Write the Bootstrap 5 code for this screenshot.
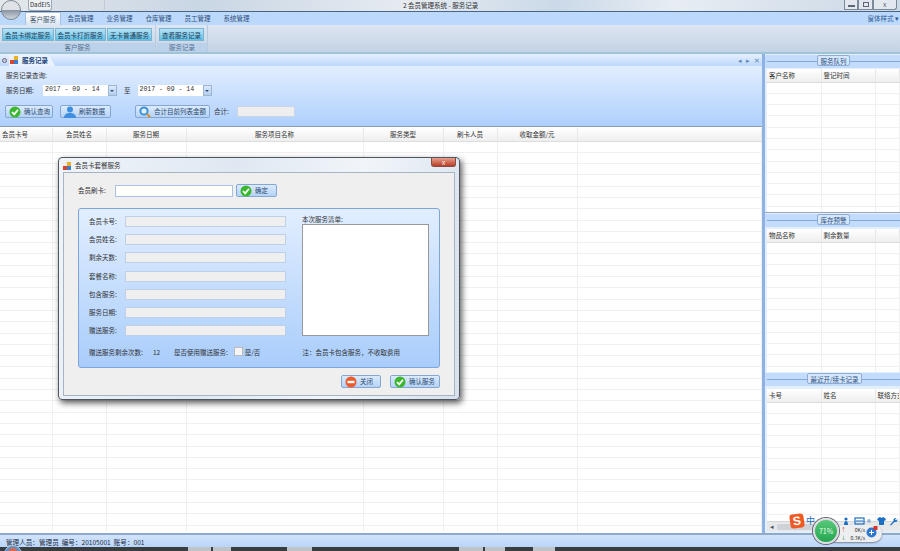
<!DOCTYPE html>
<html lang="zh">
<head>
  <meta charset="UTF-8">
  <title>DadEIS</title>
  <link href="https://cdn.jsdelivr.net/npm/bootstrap@5.3.3/dist/css/bootstrap.min.css" rel="stylesheet">
  <style>
    html, body { height: 551px; overflow: hidden; }
    body { font: 6.5px/1 "Noto Sans CJK SC", "Liberation Sans", sans-serif; color: #333; background: #fff; position: relative; }
    .app { width: 900px; height: 551px; }

    /* title bar */
    .title-strip { height: 12px; padding-left: 28px; border-bottom: 1px solid #4a6484; background: linear-gradient(100deg, #e4e8ec 0%, #c9d6e4 22%, #e6ebf1 45%, #cbd9e8 62%, #e7edf3 75%, #cbd8e6 100%); }
    .orb { position: absolute; left: 1px; top: 0; width: 20px; height: 20px; border-radius: 50%; border: 1px solid #7b8794; background: linear-gradient(#dfe3e8 0 48%, #8b96a3 52%, #cfd6dd 100%); }
    .title-tab { width: 24px; height: 11px; padding-top: 2px; text-align: center; font-size: 6px; background: #eef1f5; border: 1px solid #9ca8b5; border-top: 0; border-radius: 0 0 3px 3px; }
    .title-tab2 { width: 53px; height: 11px; background: #d7dee6; border-right: 1px solid #c3ccd6; border-radius: 0 0 3px 0; }
    .title-text { margin-left: 298px; margin-top: 2px; width: 130px; }
    .win-btns { margin-left: auto; height: 10px; margin-right: 3px; }
    .win-btn { width: 14px; height: 10px; border: 1px solid #7c8999; border-top: 0; background: #e3e8ee; position: relative; }
    .win-btn.mid { width: 15px; }
    .win-btn.wide { width: 24px; border-radius: 0 0 3px 0; }
    .win-btn span { position: absolute; left: 3px; top: 5px; width: 7px; height: 2px; border: 1px solid #5a6675; }
    .win-btn.mid span { left: 4px; top: 2px; height: 5px; width: 6px; }
    .win-btn.wide span { left: 8px; top: 2px; height: 5px; width: 6px; border: 0; }
    .win-btn.wide span::before { content: "x"; position: absolute; top: -1px; left: 1px; color: #5a6675; font-size: 7px; }

    /* menu tabs */
    .menu-strip { height: 13px; padding-left: 25px; background: #bcd8fb; }
    .menu-tab { width: 39px; text-align: center; line-height: 13px; color: #2f4f7a; }
    .menu-tab.on { width: 36px; background: linear-gradient(#fff, #dbe6f3); border: 1px solid #a9c2e0; border-bottom: 0; color: #47586c; }
    .style-link { margin-left: auto; margin-right: 1px; line-height: 13px; color: #2b5a93; }
    .ribbon { height: 27px; background: linear-gradient(#dde6f1, #c3d3e5); border-bottom: 2px solid #9fc4d8; box-sizing: content-box; }
    .rb-group { height: 27px; margin-right: 1px; border-right: 1px solid #b9cbe0; }
    .rb-btns { height: 18px; padding: 3px 3px 0 2px; gap: 1px; }
    .rb-btn { height: 13px; line-height: 12px; padding: 0 2px; background: linear-gradient(#b8e3f6, #5fc0e4); border: 1px solid #7fb3ce; color: #1d3b57; white-space: nowrap; }
    .rb-name { height: 9px; line-height: 8px; text-align: center; background: #bcd2ea; color: #55718f; }

    /* work area */
    .work { height: 479px; }
    .main-col { width: 762px; }
    .doc-tabs { height: 12px; background: linear-gradient(#e6f0fd, #bcd8fb); }
    .doc-tab { width: 46px; line-height: 12px; background: #e9f2fe; color: #1c4478; font-weight: 700; clip-path: polygon(0 0, 86% 0, 100% 100%, 0 100%); padding-left: 1px; }
    .gear { width: 5px; height: 5px; border-radius: 50%; border: 1px solid #667; background: #ccd; margin: 0 2px; }
    .doc-arrows { margin-left: auto; margin-right: 2px; color: #5d88bb; gap: 4px; line-height: 12px; }
    .query { height: 61px; padding: 4px 5px 0; background: linear-gradient(#e2eeff, #aed0fd); border-bottom: 1px solid #8e9db0; }
    .q-line { height: 11px; line-height: 11px; }
    .q-label { width: 38px; padding-left: 1px; }
    .q-to { margin: 0 7px; }
    .q-btns { margin-top: 9px; }
    .date-box { width: 74px; height: 11px; background: #fff; position: relative; padding-left: 2px; line-height: 10px; font-family: "Liberation Mono", monospace; }
    .date-box::before { content: ""; position: absolute; right: 0; top: 0; width: 9px; height: 11px; background: linear-gradient(#dce9f8, #b4cdec); border: 1px solid #9db6d4; }
    .date-box::after { content: ""; position: absolute; right: 3px; top: 5px; border: 2px solid transparent; border-top-color: #2a4f86; border-bottom: 0; }
    .sum-box { width: 58px; height: 11px; background: #eee; border: 1px solid #c8d6e6; }
    .ui-btn { height: 13px; display: flex; align-items: center; gap: 3px; padding: 0 3px; background: linear-gradient(#dcebfd, #b4d2f6); border: 1px solid #85a7d1; border-radius: 2px; color: #2c4a6e; white-space: nowrap; }
    .ui-btn svg { flex: none; }
    .bw-40 { width: 40px; }
    .bw-41 { width: 41px; }
    .bw-48 { width: 48px; }
    .bw-50 { width: 50px; }
    .bw-51 { width: 51px; margin-left: 7px; }
    .bw-75 { width: 75px; margin-left: 24px; }

    /* grids */
    .grid-tbl { border-collapse: collapse; table-layout: fixed; width: 100%; background: #fff; }
    .grid-tbl th { height: 13px; font-weight: 400; text-align: center; background: linear-gradient(#fff, #eee); border-right: 1px solid #e8e8e8; border-bottom: 1px solid #ddd; padding: 0; color: #333; white-space: nowrap; overflow: hidden; }
    .grid-tbl th.lft { text-align: left; padding-left: 2px; }
    .grid-tbl td { height: 11.3px; border-right: 1px solid #f0f0f0; border-bottom: 1px solid #f0f0f0; padding: 0; }
    .main-grid { height: 405px; overflow: hidden; background: #fff; border-top: 1px solid #fff; }
    .status-bar { height: 14px; line-height: 15px; padding-left: 6px; border-top: 2px solid #8fa9c9; background: linear-gradient(#d2e4fb, #b9d5f9); color: #1f2b3a; font-size: 6.6px; overflow: hidden; }
    .task-strip { height: 4px; background: #383d40; position: relative; }
    .task-strip i { position: absolute; top: 0; height: 4px; background: #bfc4c8; }
    .start-orb { position: absolute; left: 4px; top: 545px; width: 18px; height: 18px; border-radius: 50%; background: radial-gradient(circle at 50% 40%, #e8623a 0 22%, #4d94d8 50%, #28506f 100%); border: 1px solid #b8c4cc; }

    /* right docks */
    .side-col { width: 138px; border-left: 3px solid #8fb2e4; }
    .dock { background: #e4effd; overflow: hidden; }
    .dock-top { height: 158px; }
    .dock-mid { height: 160px; border-top: 1px solid #9aa7b6; }
    .dock-low { height: 161px; }
    .dock-cap { height: 13px; position: relative; background: #c4dcfb; }
    .dock-cap::before { content: ""; position: absolute; left: 2px; right: 0; top: 6px; height: 1px; background: #86a8d6; }
    .dock-cap span { position: relative; display: block; width: 33px; height: 11px; margin-top: 1px; line-height: 10px; margin-left: 52px; text-align: center; background: #d5e6fd; border: 1px solid #8dacd6; border-radius: 2px; color: #2b517f; white-space: nowrap; }
    .dock-cap span.long { width: 55px; margin-left: 42px; }
    .dock-body { padding: 1px 0 0 2px; overflow: hidden; }
    .dock-low .dock-body { height: 135px; padding-top: 3px; }
    .dock-mid .dock-body { padding-top: 2px; }
    .scroll-bar { height: 10px; background: #e6e8ea; position: relative; border-top: 1px solid #d4d6d9; margin-left: 2px; color: #556; padding-left: 3px; line-height: 9px; }
    .scroll-bar i { position: absolute; left: 10px; top: 2px; width: 40px; height: 6px; background: #cfd3d8; border-radius: 2px; }

    /* floating dialog */
    .dialog { position: absolute; left: 58px; top: 157px; width: 402px; height: 243px; padding: 0 4px 4px; background: linear-gradient(100deg, #f0f4f9, #dfe8f2 40%, #f1f5f9 70%, #d6e1ed); border: 1px solid #4e5660; border-radius: 4px; box-shadow: 2px 3px 6px rgba(0, 0, 0, .65); }
    .dlg-title { height: 14px; line-height: 14px; color: #333; }
    .dlg-close { margin-left: auto; width: 25px; height: 9px; margin-right: -1px; background: linear-gradient(#e8a08e, #b83d26); border: 1px solid #8a4a40; border-top: 0; border-radius: 0 0 3px 3px; color: #fff; text-align: center; line-height: 8px; }
    .dlg-client { height: 224px; background: #efefef; border: 1px solid #a6b4c4; padding: 11px 14px 0; }
    .swipe-row { height: 13px; margin-bottom: 11px; }
    .swipe-row label { width: 37px; }
    .swipe-in { width: 118px; height: 12px; background: #fff; border: 1px solid #aac0e4; margin-right: 3px; }
    .dlg-panel { height: 160px; padding: 7px 10px 0; background: linear-gradient(#e2eeff, #a9cdfb); border: 1px solid #7ea6de; border-radius: 3px; }
    .field-row { height: 11px; margin-bottom: 7.2px; line-height: 11px; }
    .field-row label { width: 36px; }
    .field-in { width: 161px; height: 11px; background: #efefef; border: 1px solid #bdd0e8; }
    .bill-col { margin-left: 16px; }
    .bill-list { width: 127px; height: 112px; margin-top: 1px; background: #fff; border: 1px solid #999; }
    .dlg-foot { margin-top: 4px; white-space: nowrap; }
    .foot-a { width: 64px; }
    .foot-b { width: 21px; }
    .foot-c { margin-left: 42px; }
    .tick { width: 9px; height: 9px; background: #f5f5f5; border: 1px solid #bbb; margin: 0 2px 0 6px; }
    .dlg-actions { gap: 9px; margin: 7px 0 0; }

    /* tray float */
    .ime-logo { position: absolute; left: 790px; top: 514px; width: 14px; height: 14px; background: #ef5a24; border-radius: 3px; color: #fff; font: 700 12px/14px "Liberation Sans", sans-serif; text-align: center; transform: rotate(-8deg); }
    .ime-tools { position: absolute; left: 806px; top: 516px; color: #1d6fc4; font-size: 9px; line-height: 1; }
    .tray-icons { position: absolute; left: 843px; top: 517px; }
    .speed-pill { position: absolute; left: 826px; top: 525px; width: 56px; height: 17px; background: #eceef0; border-radius: 9px; box-shadow: 0 1px 2px rgba(0, 0, 0, .4); font-size: 5px; }
    .speed-pill b { position: absolute; font-weight: 400; color: #333; white-space: nowrap; }
    .speed-pill .up-arrow { left: 15px; top: 1px; color: #c33; }
    .speed-pill .down-arrow { left: 15px; top: 9px; color: #2a8f3f; }
    .up-rate { right: 17px; top: 2px; }
    .down-rate { right: 17px; top: 10px; }
    .speed-pill svg { position: absolute; left: 40px; top: 1px; }
    .speed-ball { position: absolute; left: 813px; top: 518px; width: 26px; height: 26px; border-radius: 50%; background: linear-gradient(#58c878, #23a650); border: 2px solid #d9dde0; box-shadow: 0 0 0 1px #667; color: #e8ffe9; text-align: center; line-height: 22px; font-size: 7px; }
  </style>
</head>
<body>
  <div class="app d-flex flex-column">
    <div class="title-strip d-flex">
      <div class="title-tab">DadEIS</div>
      <div class="title-tab2"></div>
      <div class="title-text text-nowrap">2 会员管理系统 - 服务记录</div>
      <div class="win-btns d-flex">
        <div class="win-btn"><span></span></div>
        <div class="win-btn mid"><span></span></div>
        <div class="win-btn wide"><span></span></div>
      </div>
    </div>
    <div class="menu-strip d-flex">
      <div class="menu-tab on">客户服务</div>
      <div class="menu-tab">会员管理</div>
      <div class="menu-tab">业务管理</div>
      <div class="menu-tab">仓库管理</div>
      <div class="menu-tab">员工管理</div>
      <div class="menu-tab">系统管理</div>
      <div class="style-link">窗体样式 ▾</div>
    </div>
    <div class="ribbon d-flex">
      <div class="rb-group">
        <div class="rb-btns d-flex">
          <div class="rb-btn">会员卡绑定服务</div>
          <div class="rb-btn">会员卡打折服务</div>
          <div class="rb-btn">无卡普通服务</div>
        </div>
        <div class="rb-name">客户服务</div>
      </div>
      <div class="rb-group">
        <div class="rb-btns d-flex">
          <div class="rb-btn">查看服务记录</div>
        </div>
        <div class="rb-name">服务记录</div>
      </div>
    </div>

    <div class="work d-flex">
      <div class="main-col">
        <div class="doc-tabs d-flex align-items-center">
          <span class="gear"></span>
          <div class="doc-tab d-flex align-items-center gap-1">
            <svg width="8" height="8" viewBox="0 0 8 8"><rect width="4" height="4" y="4" fill="#d9452b"/><rect x="4" width="4" height="4" fill="#e8b02a"/><rect x="4" y="4" width="4" height="4" fill="#3b7fd1"/><rect width="4" height="4" fill="#eee"/></svg>
            服务记录
          </div>
          <div class="doc-arrows d-flex"><span>◂</span><span>▸</span><span>✕</span></div>
        </div>
        <div class="query">
          <div class="q-line q-label text-nowrap">服务记录查询:</div>
          <div class="q-line d-flex mt-1">
            <span class="q-label">服务日期:</span>
            <span class="date-box">2017 - 09 - 14</span>
            <span class="q-to">至</span>
            <span class="date-box">2017 - 09 - 14</span>
          </div>
          <div class="q-btns d-flex align-items-center">
            <div class="ui-btn bw-48">
              <svg width="12" height="12" viewBox="0 0 12 12"><circle cx="6" cy="6" r="5.5" fill="#3cb82e"/><path d="M3 6l2.2 2.4L9 3.8" fill="none" stroke="#fff" stroke-width="1.8"/></svg>确认查询
            </div>
            <div class="ui-btn bw-51">
              <svg width="12" height="12" viewBox="0 0 12 12"><circle cx="6" cy="3.5" r="3" fill="#3f8fe0"/><path d="M0 12c0-4 3-5 6-5s6 1 6 5z" fill="#3f8fe0"/></svg>刷新数据
            </div>
            <div class="ui-btn bw-75">
              <svg width="12" height="12" viewBox="0 0 12 12"><circle cx="5" cy="5" r="3.6" fill="#dff0fb" stroke="#3a92d8" stroke-width="2"/><path d="M8 8l3 3" stroke="#e0902a" stroke-width="2.2"/></svg>合计目前列表金额
            </div>
            <span class="ms-1 me-2">合计:</span>
            <div class="sum-box"></div>
          </div>
        </div>
        <div class="main-grid">
          <table class="grid-tbl">
            <colgroup><col style="width:52px"><col style="width:54px"><col style="width:80px"><col style="width:177px"><col style="width:80px"><col style="width:54px"><col style="width:80px"><col></colgroup>
            <thead><tr><th class="lft">会员卡号</th><th>会员姓名</th><th>服务日期</th><th>服务项目名称</th><th>服务类型</th><th>刷卡人员</th><th>收取金额/元</th><th></th></tr></thead>
            <tbody id="mainRows"></tbody>
          </table>
        </div>
      </div>

      <div class="side-col d-flex flex-column">
        <div class="dock dock-top">
          <div class="dock-cap"><span>服务队列</span></div>
          <div class="dock-body">
            <table class="grid-tbl" data-rows="13">
              <colgroup><col style="width:54px"><col style="width:54px"><col></colgroup>
              <thead><tr><th class="lft">客户名称</th><th class="lft">登记时间</th><th></th></tr></thead>
              <tbody></tbody>
            </table>
          </div>
        </div>
        <div class="dock dock-mid">
          <div class="dock-cap"><span>库存预警</span></div>
          <div class="dock-body">
            <table class="grid-tbl" data-rows="13">
              <colgroup><col style="width:54px"><col style="width:54px"><col></colgroup>
              <thead><tr><th class="lft">物品名称</th><th class="lft">剩余数量</th><th></th></tr></thead>
              <tbody></tbody>
            </table>
          </div>
        </div>
        <div class="dock dock-low flex-grow-1">
          <div class="dock-cap"><span class="long">最近开/续卡记录</span></div>
          <div class="dock-body">
            <table class="grid-tbl" data-rows="12">
              <colgroup><col style="width:54px"><col style="width:54px"><col></colgroup>
              <thead><tr><th class="lft">卡号</th><th class="lft">姓名</th><th class="lft">联络方式</th></tr></thead>
              <tbody></tbody>
            </table>
          </div>
          <div class="scroll-bar">◂<i></i></div>
        </div>
      </div>
    </div>

    <div class="status-bar">管理人员：管理员&nbsp; 编号：20105001&nbsp; 账号：001</div>
    <div class="task-strip" id="taskStrip"></div>
  </div>

  <span class="orb"></span>
  <span class="start-orb"></span>

  <!-- dialog -->
  <div class="dialog">
    <div class="dlg-title d-flex align-items-start">
      <svg class="me-1 mt-1" width="8" height="8" viewBox="0 0 8 8"><rect y="4" width="4" height="4" fill="#d9452b"/><rect x="4" width="4" height="4" fill="#e8b02a"/><rect x="4" y="4" width="4" height="4" fill="#3b7fd1"/><rect width="4" height="4" fill="#eee"/></svg>
      <span>会员卡套餐服务</span>
      <div class="dlg-close">x</div>
    </div>
    <div class="dlg-client">
      <div class="swipe-row d-flex align-items-center">
        <label>会员刷卡:</label>
        <div class="swipe-in"></div>
        <div class="ui-btn bw-41">
          <svg width="12" height="12" viewBox="0 0 12 12"><circle cx="6" cy="6" r="5.5" fill="#3cb82e"/><path d="M3 6l2.2 2.4L9 3.8" fill="none" stroke="#fff" stroke-width="1.8"/></svg>确定
        </div>
      </div>
      <div class="dlg-panel">
        <div class="d-flex">
          <div>
            <div class="field-row d-flex"><label>会员卡号:</label><div class="field-in"></div></div>
            <div class="field-row d-flex"><label>会员姓名:</label><div class="field-in"></div></div>
            <div class="field-row d-flex"><label>剩余天数:</label><div class="field-in"></div></div>
            <div class="field-row d-flex"><label>套餐名称:</label><div class="field-in"></div></div>
            <div class="field-row d-flex"><label>包含服务:</label><div class="field-in"></div></div>
            <div class="field-row d-flex"><label>服务日期:</label><div class="field-in"></div></div>
            <div class="field-row d-flex"><label>赠送服务:</label><div class="field-in"></div></div>
          </div>
          <div class="bill-col">
            <div>本次服务清单:</div>
            <div class="bill-list"></div>
          </div>
        </div>
        <div class="dlg-foot d-flex align-items-center">
          <span class="foot-a">赠送服务剩余次数:</span>
          <span class="foot-b">12</span>
          <span>是否使用赠送服务:</span>
          <span class="tick"></span>
          <span>是/否</span>
          <span class="foot-c">注：会员卡包含服务，不收取费用</span>
        </div>
      </div>
      <div class="dlg-actions d-flex justify-content-end">
        <div class="ui-btn bw-40">
          <svg width="12" height="12" viewBox="0 0 12 12"><circle cx="6" cy="6" r="5.5" fill="#ee5b2b"/><rect x="2.5" y="4.8" width="7" height="2.4" fill="#fff"/></svg>关闭
        </div>
        <div class="ui-btn bw-50">
          <svg width="12" height="12" viewBox="0 0 12 12"><circle cx="6" cy="6" r="5.5" fill="#3cb82e"/><path d="M3 6l2.2 2.4L9 3.8" fill="none" stroke="#fff" stroke-width="1.8"/></svg>确认服务
        </div>
      </div>
    </div>
  </div>

  <!-- tray widgets on top of the window -->
  <div class="ime-logo">S</div>
  <div class="ime-tools">中</div>
  <svg class="tray-icons" width="56" height="9" viewBox="0 0 56 9">
    <circle cx="3" cy="2" r="1.6" fill="#1d6fc4"/><path d="M1 8c0-3 1-4 2-4s2 1 2 4z" fill="#1d6fc4"/>
    <rect x="12" y="1" width="9" height="6" fill="none" stroke="#1d6fc4" stroke-width="1.2"/><path d="M13 4h7" stroke="#1d6fc4"/>
    <circle cx="26" cy="4" r="2" fill="#9fb8d8"/>
    <path d="M35 1l2-1 1.5 1 1.5-1 2 1 1 2-2 1v4h-5V4l-2-1z" fill="#1d6fc4"/>
    <path d="M47 8l3.5-4a2.4 2.4 0 0 1 3-3l-1.5 1.500 1 1 1.500-1.500a2.4 2.4 0 0 1-3 3L48 8.500z" fill="#1d6fc4"/>
  </svg>
  <div class="speed-pill">
    <b class="up-arrow">↑</b><b class="up-rate">0K/s</b>
    <b class="down-arrow">↓</b><b class="down-rate">0.3K/s</b>
    <svg width="12" height="14" viewBox="0 0 12 14"><circle cx="5.500" cy="6.500" r="5" fill="#2f78cf"/><path d="M3 6.500h5M5.500 4v5" stroke="#fff"/><rect x="7.500" y="0" width="4" height="4" fill="#d8322c"/></svg>
  </div>
  <div class="speed-ball">71%</div>

  <script src="https://cdn.jsdelivr.net/npm/bootstrap@5.3.3/dist/js/bootstrap.bundle.min.js"></script>
  <script>
    // empty grid rows
    function fillRows(body, count, cols) {
      let html = '';
      for (let i = 0; i < count; i++) {
        html += '<tr>' + '<td></td>'.repeat(cols) + '</tr>';
      }
      body.innerHTML = html;
    }
    fillRows(document.getElementById('mainRows'), 36, 8);
    document.querySelectorAll('table[data-rows]').forEach(function (t) {
      fillRows(t.querySelector('tbody'), Number(t.dataset.rows), 3);
    });

    // taskbar buttons, [left, width]
    const taskButtons = [[188, 23], [213, 18], [287, 25], [459, 24], [485, 20], [533, 22]];
    document.getElementById('taskStrip').innerHTML = taskButtons.map(function (b) {
      return '<i style="left:' + b[0] + 'px;width:' + b[1] + 'px"></i>';
    }).join('');
  </script>
</body>
</html>
